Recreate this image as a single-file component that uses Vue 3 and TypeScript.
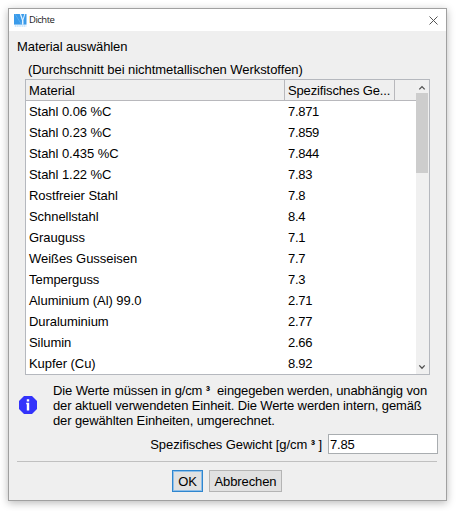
<script setup lang="ts">
import { ref } from 'vue'

interface Material {
  name: string
  weight: string
}

const materials: Material[] = [
  { name: 'Stahl 0.06 %C', weight: '7.871' },
  { name: 'Stahl 0.23 %C', weight: '7.859' },
  { name: 'Stahl 0.435 %C', weight: '7.844' },
  { name: 'Stahl 1.22 %C', weight: '7.83' },
  { name: 'Rostfreier Stahl', weight: '7.8' },
  { name: 'Schnellstahl', weight: '8.4' },
  { name: 'Grauguss', weight: '7.1' },
  { name: 'Weißes Gusseisen', weight: '7.7' },
  { name: 'Temperguss', weight: '7.3' },
  { name: 'Aluminium (Al) 99.0', weight: '2.71' },
  { name: 'Duraluminium', weight: '2.77' },
  { name: 'Silumin', weight: '2.66' },
  { name: 'Kupfer (Cu)', weight: '8.92' },
]

const value = ref('7.85')
</script>

<template>
  <main class="desktop">
    <section class="dialog">
      <header class="titlebar">
        <svg class="logo" width="13" height="13" viewBox="0 0 13 13">
          <rect width="12.5" height="10.6" fill="#3a9bea" />
          <path d="M1 0 7.6 10.6" fill="none" stroke="#6fb8f1" stroke-width=".6" />
          <path d="M6.4 0 8.6 6.4V10.6" fill="none" stroke="#e4f3ff" stroke-width="1.3" />
          <path d="M10.8 0 8.8 6.4V10.6" fill="none" stroke="#e4f3ff" stroke-width="1" />
          <path d="M.8 12H12.4" stroke="#9fd0f7" stroke-width="1.2" stroke-dasharray="1.3 .5" />
        </svg>
        <span class="title">Dichte</span>
        <svg class="close" width="9" height="9" viewBox="0 0 9 9">
          <path d="M.5.5 8.5 8.5M8.5.5.5 8.5" stroke="#555" stroke-width="1" />
        </svg>
      </header>
      <div class="content">
        <h1 class="heading">Material auswählen</h1>
        <p class="sub">(Durchschnitt bei nichtmetallischen Werkstoffen)</p>
        <div class="table">
          <div class="grid">
            <div class="head">
              <span class="col-name">Material</span>
              <span class="col-weight">Spezifisches Ge...</span>
            </div>
            <div v-for="m in materials" :key="m.name" class="row">
              <span class="col-name">{{ m.name }}</span>
              <span class="col-weight">{{ m.weight }}</span>
            </div>
          </div>
          <div class="scrollbar">
            <svg width="12" height="13" viewBox="0 0 12 13">
              <path d="M3.3 9.4 6 6.6 8.7 9.4" fill="none" stroke="#505050" stroke-width="1.3" />
            </svg>
            <div class="thumb"></div>
            <svg class="down" width="12" height="13" viewBox="0 0 12 13">
              <path d="M3.3 4.4 6 7.2 8.7 4.4" fill="none" stroke="#505050" stroke-width="1.3" />
            </svg>
          </div>
        </div>
        <div class="info">
          <svg width="18" height="18" viewBox="0 0 18 18">
            <path d="M5 0H13L18 5V13L13 18H5L0 13V5Z" fill="#3333fb" />
            <path d="M7.8 3.2h2.4v2.2H7.8ZM7.2 6.8h3v7.6H7.8V8.2h-.6Z" fill="#fff" />
          </svg>
          <p>Die Werte müssen in g/cm <b>³</b>&nbsp; eingegeben werden, unabhängig von<br />der aktuell verwendeten Einheit. Die Werte werden intern, gemäß<br />der gewählten Einheiten, umgerechnet.</p>
        </div>
        <label class="field">
          <span>Spezifisches Gewicht [g/cm <b>³</b> ]</span>
          <input v-model="value" type="text" />
        </label>
        <footer class="actions">
          <button type="button" class="primary">OK</button>
          <button type="button">Abbrechen</button>
        </footer>
      </div>
    </section>
  </main>
</template>

<style>
body {
  background: #fff;
}
</style>

<style scoped>
* {
  box-sizing: border-box;
}
.desktop {
  width: 456px;
  height: 511px;
  padding: 8px;
  overflow: hidden;
  font: 13px/15px 'Liberation Sans', Arial, sans-serif;
  color: #000;
}
.dialog {
  width: 439px;
  height: 493px;
  border: 1px solid #a0a0a0;
  background: #efefef;
  box-shadow: 0 2px 8px rgba(0, 0, 0, 0.28);
}
.titlebar {
  display: flex;
  align-items: center;
  height: 22px;
  padding: 0 8px 0 5px;
  background: #fff;
}
.title {
  margin-left: 2px;
  font: 9.5px/14px 'Open Sans', 'Noto Sans', sans-serif;
  letter-spacing: -0.5px;
  color: #222;
}
.close {
  margin-left: auto;
}
.content {
  padding: 8px 9px 0 8px;
}
.heading {
  margin: 0;
  font-size: 13px;
  font-weight: 400;
  line-height: 15px;
  letter-spacing: -0.09px;
}
.sub {
  margin: 8px 0 0 11px;
  letter-spacing: -0.06px;
}
.table {
  display: flex;
  width: 405px;
  height: 296px;
  margin: 2px 0 0 8px;
  border: 1px solid #b5b8be;
  background: #fff;
}
.grid {
  flex: 1;
}
.head,
.row {
  display: flex;
  height: 21px;
  line-height: 21px;
}
.head {
  border-bottom: 1px solid #b8b8bc;
  background: #efefef;
}
.col-name {
  width: 259px;
  padding-left: 3px;
  letter-spacing: -0.05px;
}
.col-weight {
  width: 110px;
  padding-left: 3px;
  letter-spacing: -0.3px;
}
.head .col-weight {
  letter-spacing: -0.14px;
}
.head .col-name,
.head .col-weight {
  border-right: 1px solid #b8b8bc;
}
.scrollbar {
  display: flex;
  flex-direction: column;
  width: 13px;
  padding-right: 1px;
  background: #f0f0f0;
}
.scrollbar svg {
  display: block;
  flex: none;
}
.thumb {
  height: 80px;
  background: #cdcdcd;
}
.down {
  margin-top: auto;
}
.info {
  display: flex;
  align-items: center;
  gap: 16px;
  margin: 8px 0 0 2px;
}
.info svg {
  flex: none;
  margin-bottom: 1px;
}
.info p {
  margin: 0;
  white-space: nowrap;
  letter-spacing: -0.12px;
}
.field {
  display: flex;
  justify-content: flex-end;
  align-items: center;
  gap: 6px;
  margin-top: 6px;
  letter-spacing: -0.08px;
}
.field input {
  width: 110px;
  height: 20px;
  margin-right: -1px;
  padding: 0 1px;
  border: 1px solid #a9adb0;
  border-radius: 0;
  background: #fff;
  color: inherit;
  font: inherit;
  letter-spacing: -0.2px;
  outline: none;
}
.actions {
  display: flex;
  justify-content: center;
  gap: 6px;
  margin-top: 7px;
  padding-top: 8px;
  border-top: 1px solid #c0c0c0;
}
.actions button {
  height: 22px;
  width: 73px;
  padding: 0;
  border: 1px solid #b4b4b4;
  background: #e1e1e1;
  color: inherit;
  font: inherit;
  letter-spacing: -0.1px;
}
.actions .primary {
  width: 31px;
  border: 1px solid #2f86cf;
  box-shadow: inset 0 0 0 1px #8fbfe8;
}
</style>
